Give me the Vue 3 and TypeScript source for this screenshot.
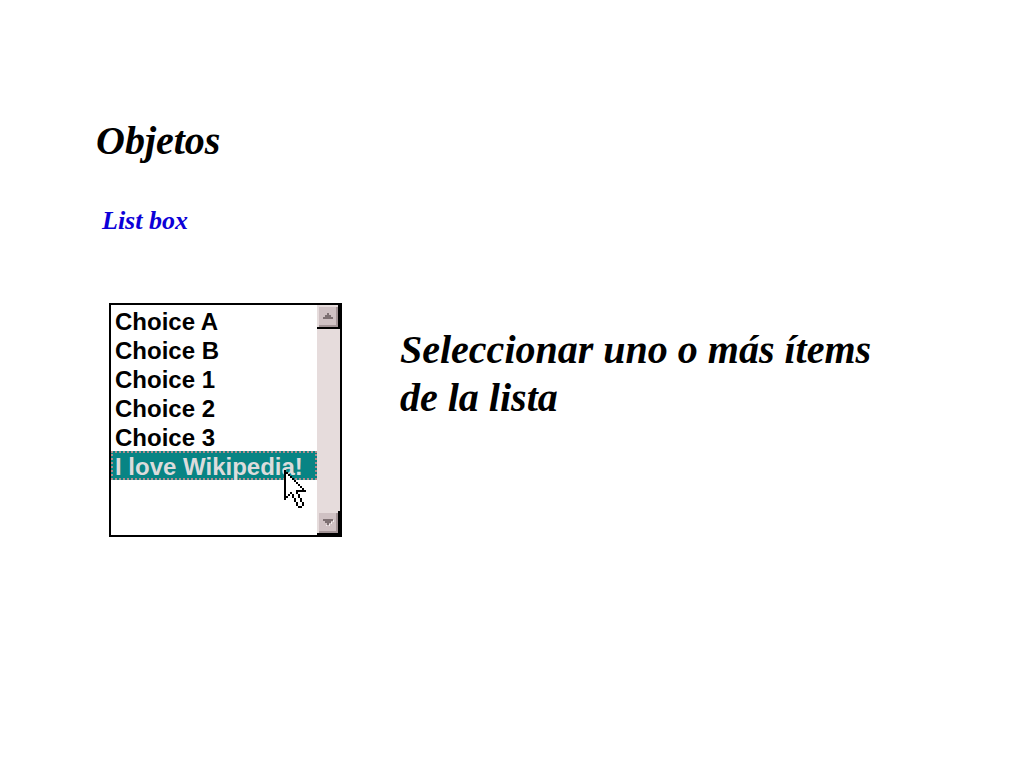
<script setup lang="ts">
import { ref } from 'vue'

const choices: string[] = ['Choice A', 'Choice B', 'Choice 1', 'Choice 2', 'Choice 3', 'I love Wikipedia!']
const selected = ref<string[]>(['I love Wikipedia!'])

// Arrow pointer bitmap: X is outline, . is fill
const pointer: string[] = [
  'X',
  'XX',
  'X.X',
  'X..X',
  'X...X',
  'X....X',
  'X.....X',
  'X......X',
  'X.......X',
  'X........X',
  'X.....XXXXX',
  'X..X..X',
  'X.X X..X',
  'XX  X..X',
  'X    X..X',
  '     X..X',
  '      X..X',
  '      X..X',
  '       XX',
]

function cells(mark: string): string {
  return pointer
    .flatMap((row, y) => [...row].map((c, x) => (c === mark ? `M${x} ${y}h1v1h-1z` : '')))
    .join('')
}

const outline = cells('X')
const fill = cells('.')
</script>

<template>
  <main class="slide">
    <h1 class="title">Objetos</h1>
    <h2 class="subtitle"><label for="choices">List box</label></h2>
    <div class="content">
      <div class="listbox">
        <select id="choices" v-model="selected" class="options" multiple size="6">
          <option v-for="choice in choices" :key="choice" :value="choice" class="option">{{ choice }}</option>
        </select>
        <div class="scrollbar">
          <button type="button" class="arrow up" aria-label="Scroll up">
            <svg width="12" height="8" viewBox="0 0 12 8" shape-rendering="crispEdges">
              <path d="M5 1h2v2h2v2h2v2H1V5h2V3h2z" fill="#7d7072" />
            </svg>
          </button>
          <button type="button" class="arrow down" aria-label="Scroll down">
            <svg width="12" height="8" viewBox="0 0 12 8" shape-rendering="crispEdges">
              <path d="M3 7h2v1h2V6h2V4h2V2h1v2h-2v2H8v2H5z" fill="#f4eeee" />
              <path d="M1 1h10v2H9v2H7v2H5V5H3V3H1z" fill="#7d7072" />
            </svg>
          </button>
        </div>
        <svg class="pointer" width="22" height="38" viewBox="0 0 11 19" shape-rendering="crispEdges" aria-hidden="true">
          <path :d="fill" fill="#fff" />
          <path :d="outline" fill="#000" />
        </svg>
      </div>
      <p class="description">Seleccionar uno o más ítems de la lista</p>
    </div>
  </main>
</template>

<style>
body {
  margin: 0;
  background: #fff;
}
</style>

<style scoped>
.slide {
  box-sizing: border-box;
  padding: 117px 96px 48px;
  font-family: "Liberation Serif", "Times New Roman", serif;
  font-weight: bold;
  font-style: italic;
  color: #000;
}

.title {
  margin: 0;
  font-size: 40px;
  line-height: 48px;
}

.subtitle {
  margin: 40px 0 0 6px;
  font-size: 26px;
  line-height: 32px;
  color: #0c00d8;
}

.content {
  display: flex;
  align-items: flex-start;
  gap: 58px;
  margin: 66px 0 0 13px;
}

.listbox {
  position: relative;
  display: flex;
  flex: none;
  border: 2px solid #000;
}

.options {
  box-sizing: border-box;
  width: 206px;
  height: 230px;
  margin: 0;
  padding: 1px 0 0;
  border: 0;
  border-radius: 0;
  outline: none;
  overflow: hidden;
  scrollbar-width: none;
  background: #fff;
  font: bold 24px "Liberation Sans", Arial, sans-serif;
}

.option {
  box-sizing: border-box;
  height: 29px;
  min-height: 29px;
  padding: 0 2px;
  border: 2px solid transparent;
  font-weight: bold;
  line-height: 25px;
  color: #000;
  -webkit-text-fill-color: #000;
}

.option:checked {
  border: 2px dotted #b08c8c;
  background: #088484 linear-gradient(#088484, #088484);
  -webkit-text-fill-color: #dcdcdc;
}

.scrollbar {
  display: flex;
  flex-direction: column;
  justify-content: space-between;
  width: 23px;
  background: #e6dcdc;
}

.arrow {
  display: flex;
  align-items: center;
  justify-content: center;
  box-sizing: border-box;
  width: 23px;
  height: 24px;
  margin: 0;
  padding: 0;
  border: solid #000;
  border-width: 0 2px 2px 0;
  border-radius: 0;
  background: #cfc1c3;
  box-shadow: inset 2px 2px #e6dcdc, inset -2px -2px #a39496;
}

.pointer {
  position: absolute;
  left: 173px;
  top: 165px;
}

.description {
  flex: 1;
  max-width: 500px;
  margin: 23px 0 0;
  font-size: 40px;
  line-height: 48px;
}
</style>
